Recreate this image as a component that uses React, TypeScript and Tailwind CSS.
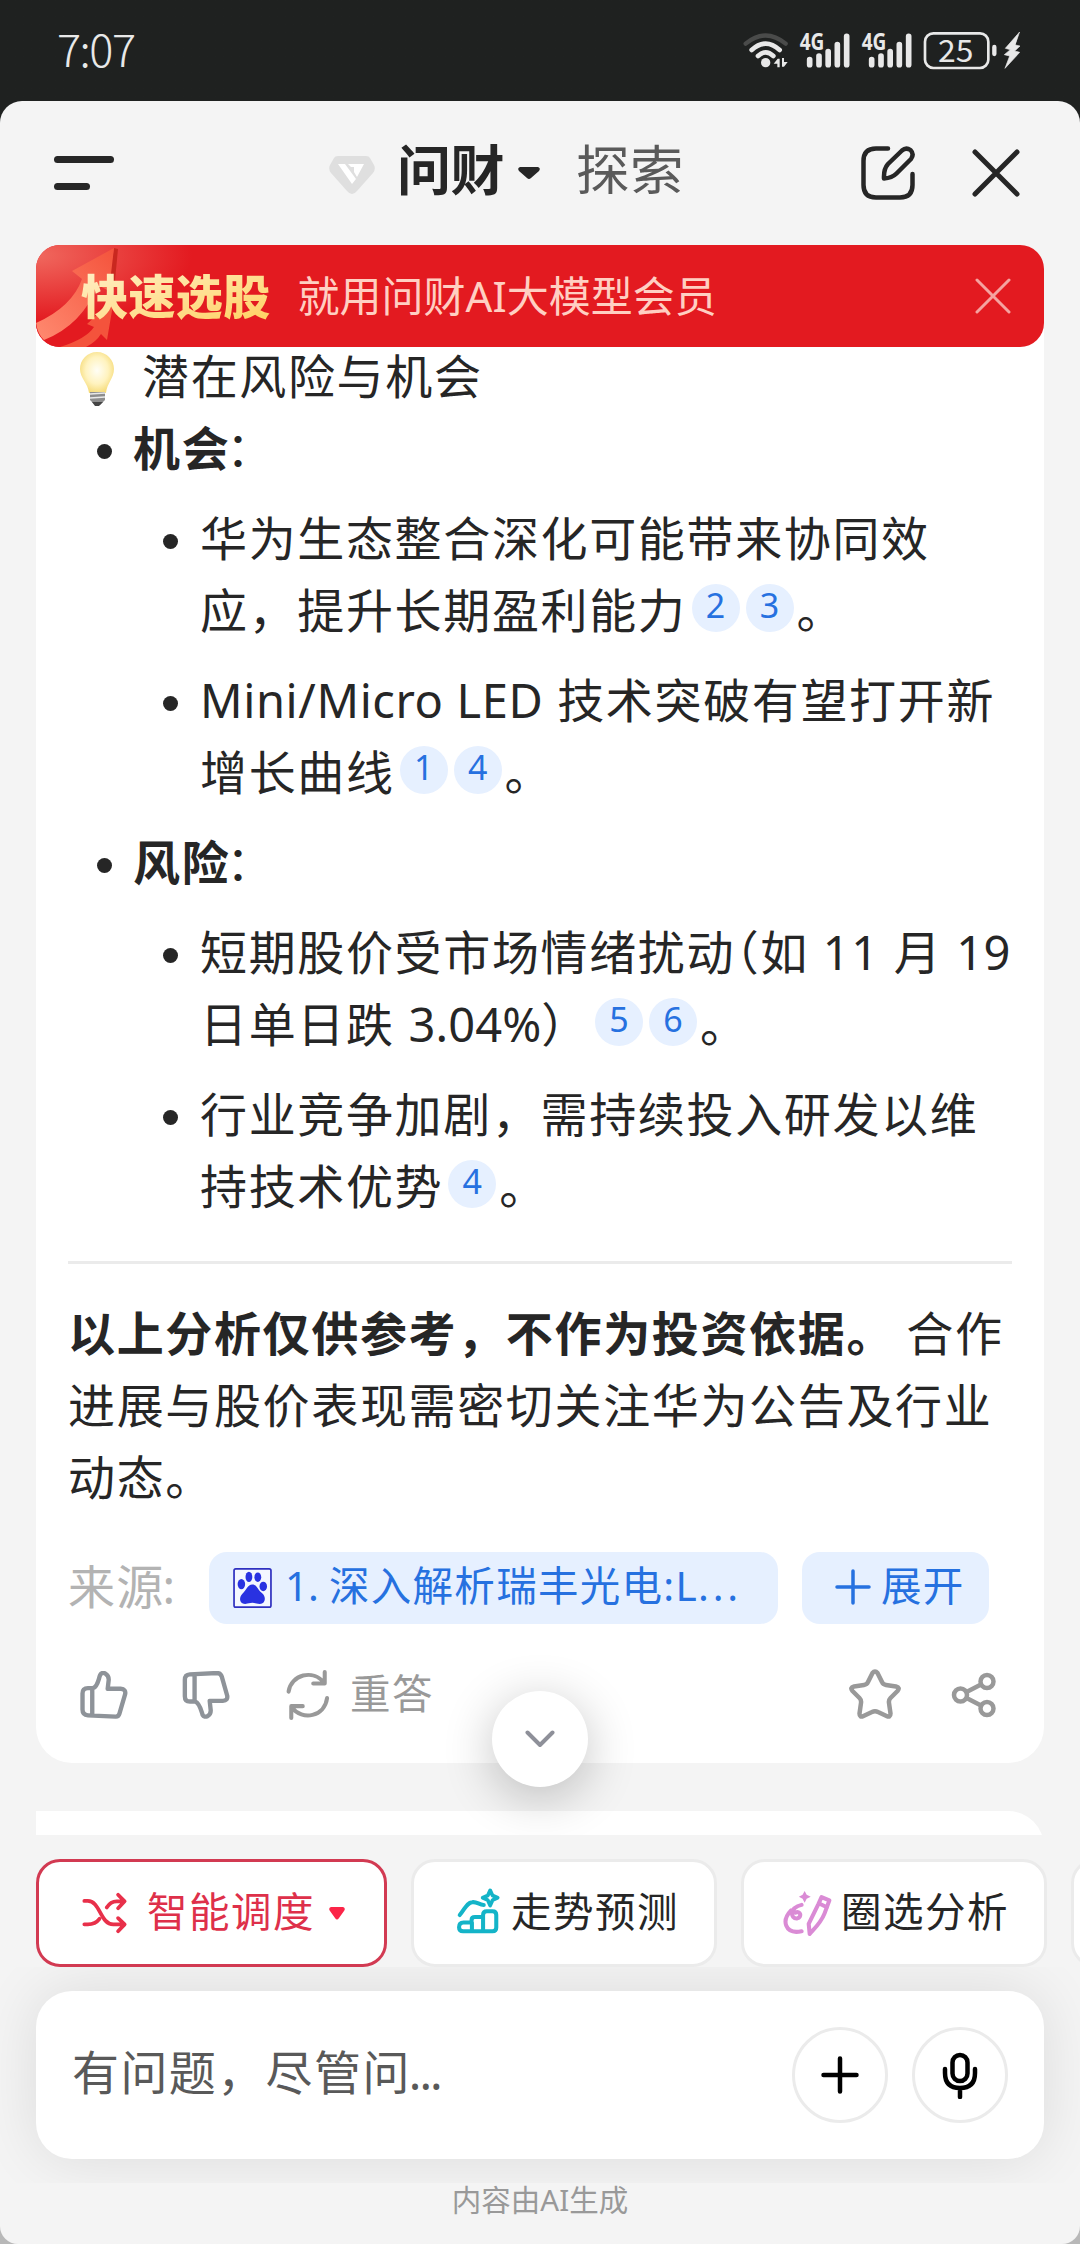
import React from 'react';

const Cite = ({ n }: { n: number }) => (
  <span className="inline-flex justify-center align-top w-12 h-12 mt-[10px] ml-[5px] mr-px rounded-full bg-[#e6f0ff] text-[#2671e0] text-[34px] leading-[43px] tracking-normal">
    {n}
  </span>
);

const Dot = () => <span className="w-[15px] h-[15px] mt-8 rounded-full bg-[#262626] shrink-0" />;

const StatusBar = () => (
  <div className="h-[101px] shrink-0 flex items-start justify-between pl-[57px] pr-[58px] pt-[30px] text-[#e8e8e8]">
    <div className="text-[45px] leading-[39px] mt-[-2px] font-light tracking-[-1.500px] font-['Noto_Sans_CJK_SC',sans-serif]">7:07</div>
    <svg width="279" height="40" viewBox="130 90 837 120" fill="none" stroke="currentColor" strokeLinecap="round" className="overflow-visible">
      <path d="M138 131Q198 82 258 131" stroke="#4a4b4a" strokeWidth="13" />
      <path d="M156 150Q198 112 240 150" strokeWidth="14" />
      <path d="M175 168Q198 146 221 168" strokeWidth="14" />
      <circle cx="198" cy="188" r="14" fill="currentColor" stroke="none" />
      <path d="M222 191L234 176H240V202H233V191ZM264 186L253 200H247V174H253V186Z" fill="currentColor" stroke="none" />
      {[0, 186].map((dx) => (
        <g key={dx} transform={`translate(${dx} 0)`}>
          <text x="300" y="150" fontSize="67" fontWeight="700" textLength="74" lengthAdjust="spacingAndGlyphs" fill="currentColor" stroke="none" fontFamily="Noto Sans">4G</text>
          <path d="M330 179V194M358 168V194M385.500 155V194M413 134V194M441 109V194" strokeWidth="17" />
        </g>
      ))}
      <rect x="676" y="100" width="190" height="104" rx="25" strokeWidth="8" />
      <text x="715" y="186" fontSize="94" fontWeight="400" textLength="106" lengthAdjust="spacingAndGlyphs" fill="currentColor" stroke="none" fontFamily="Noto Sans CJK SC">25</text>
      <path d="M884 141V162" strokeWidth="13" />
      <path d="M959 97L917 145L932 149L914 164L930 168L916 205L960 157L945 153L961 138L947 135Z" fill="currentColor" strokeWidth="2" strokeLinejoin="round" />
    </svg>
  </div>
);

const Header = () => (
  <header className="h-[144px] shrink-0 flex items-center pl-[54px] pr-[59px]">
    <div className="flex flex-col gap-5 w-[275px]">
      <span className="w-[60px] h-[7px] rounded-full bg-[#262626]" />
      <span className="w-9 h-[7px] rounded-full bg-[#262626]" />
    </div>
    <svg width="46" height="40" viewBox="0 0 46 40" className="mt-1">
      <path d="M9 1H37Q40 1 41 3L45 10Q47 14 44 18L28 36Q23 42 18 36L2 18Q-1 14 1 10L5 3Q6 1 9 1Z" fill="#dfdfdf" />
      <path d="M9 9H16L27 24L23 29ZM19 9H35L28 22L25 17V12H22Z" fill="#fff" />
    </svg>
    <h1 className="ml-[22px] mt-[-6px] w-[107px] text-[54px] tracking-[-0.500px] leading-[60px] font-bold text-[#262626] whitespace-nowrap">问财</h1>
    <svg width="24" height="14" viewBox="0 0 24 14" className="ml-[13px]">
      <path d="M3 1H21Q24 2 22 5L14 12Q12 14 10 12L2 5Q0 2 3 1Z" fill="#262626" />
    </svg>
    <span className="ml-[35px] mt-[-6px] text-[53.500px] tracking-[0.500px] leading-[60px] text-[#5a5a5a]">探索</span>
    <svg width="56" height="56" viewBox="0 0 56 56" fill="none" stroke="#262626" strokeWidth="4.500" strokeLinecap="round" strokeLinejoin="round" className="ml-auto">
      <path d="M28 3.500H16Q3.500 3.500 3.500 16V40Q3.500 52.500 16 52.500H40Q52.500 52.500 52.500 40V29" />
      <path d="M28 19L42 5.500Q46 2 50.500 5Q54.500 9 51 14L36.500 28.500Q32 33 24 33.500Q23.500 24 28 19Z" />
    </svg>
    <svg width="52" height="52" viewBox="0 0 52 52" fill="none" stroke="#262626" strokeWidth="5" strokeLinecap="round" className="ml-[54px] mr-[-1px]">
      <path d="M5 5L47 47M47 5L5 47" />
    </svg>
  </header>
);

const Banner = () => (
  <div className="relative z-10 h-[102px] mb-[-24px] shrink-0 mx-9 flex items-center rounded-[24px] overflow-hidden bg-[#e31a20] pr-[33px]">
    <svg width="240" height="102" viewBox="0 0 240 102" className="absolute left-0 top-0">
      <defs>
        <radialGradient id="glow" cx="0" cy="0.100" r="0.650">
          <stop offset="0" stopColor="#f0685e" />
          <stop offset="1" stopColor="#e31a20" />
        </radialGradient>
        <linearGradient id="arrow" x1="0" y1="1" x2="1" y2="0">
          <stop offset="0" stopColor="#ff8a70" />
          <stop offset="1" stopColor="#f4533c" />
        </linearGradient>
      </defs>
      <rect width="240" height="102" fill="url(#glow)" />
      <path d="M78 3L82 4L78 46L72 40Z" fill="#c9281f" />
      <path d="M0 78Q36 62 46 34L36 26L78 3L73 46L62 40Q46 80 8 95Q2 90 0 78Z" fill="url(#arrow)" />
      <path d="M24 102Q50 94 58 82L51 79L78 54L71 95L65 89Q60 97 50 102Z" fill="#f4533c" />
    </svg>
    <span className="relative ml-[45px] text-[47px] tracking-[0.400px] leading-[60px] font-black bg-linear-to-br from-[#fff0c8] to-[#ffd05a] bg-clip-text text-transparent whitespace-nowrap">快速选股</span>
    <span className="relative ml-[27px] text-[42px] leading-[60px] text-[#ffcfc2] whitespace-nowrap">就用问财AI大模型会员</span>
    <svg width="36" height="36" viewBox="0 0 36 36" stroke="#f5a3a0" strokeWidth="3" strokeLinecap="round" className="ml-auto">
      <path d="M2 2L34 34M34 2L2 34" />
    </svg>
  </div>
);

const Bulb = () => (
  <svg width="34" height="54" viewBox="0 0 34 54" className="mt-[5px]">
    <defs>
      <radialGradient id="bulb" cx="0.500" cy="0.450" r="0.550">
        <stop offset="0" stopColor="#fffef6" />
        <stop offset="0.600" stopColor="#fff3bf" />
        <stop offset="1" stopColor="#f6dc7c" />
      </radialGradient>
    </defs>
    <path d="M17 0C27 0 34 8 34 17C34 26 27 31 26 41H9C8 31 0 26 0 17C0 8 7 0 17 0Z" fill="url(#bulb)" />
    <path d="M10 40H25V48L20 53H15L10 48Z" fill="#8d8d8d" />
    <path d="M10 42L25 41M10 46L25 45" stroke="#e8e8e8" strokeWidth="1.500" />
    <path d="M12 50H23L19 54H15Z" fill="#444" />
  </svg>
);

const Answer = () => (
  <div className="text-[47px] leading-[72px] tracking-[1.650px] whitespace-nowrap text-[#262626]">
    <div className="flex items-center h-[72px] pl-[12px]">
      <Bulb />
      <span className="ml-[28px]">潜在风险与机会</span>
    </div>
    <ul className="pl-[29px]">
      <li className="flex gap-[21px]">
        <Dot />
        <p><b>机会</b><span className="ml-[-4px]">：</span></p>
      </li>
      <li className="mt-[18px] ml-[66px] flex gap-[22px]">
        <Dot />
        <p>华为生态整合深化可能带来协同效<br />应，提升长期盈利能力<Cite n={2} /><Cite n={3} /><span className="ml-[2px]">。</span></p>
      </li>
      <li className="mt-[18px] ml-[66px] flex gap-[22px]">
        <Dot />
        <p><span className="tracking-[0.600px]">Mini/Micro LED</span> 技术突破有望打开新<br />增长曲线<Cite n={1} /><Cite n={4} /><span className="ml-[2px]">。</span></p>
      </li>
      <li className="mt-[18px] flex gap-[21px]">
        <Dot />
        <p><b>风险</b><span className="ml-[-4px]">：</span></p>
      </li>
      <li className="mt-[18px] ml-[66px] flex gap-[22px]">
        <Dot />
        <p>短期股价受市场情绪扰动<span className="[font-feature-settings:'halt']">（</span>如 11 月 <span className="tracking-[0.200px]">19</span><br />日单日跌 <span className="tracking-[0.100px]">3.04%</span>）<Cite n={5} /><Cite n={6} /><span className="ml-[2px]">。</span></p>
      </li>
      <li className="mt-[18px] ml-[66px] flex gap-[22px]">
        <Dot />
        <p>行业竞争加剧，需持续投入研发以维<br />持技术优势<Cite n={4} /><span className="ml-[2px]">。</span></p>
      </li>
    </ul>
    <hr className="mt-[39px] mb-[33px] h-[3px] border-0 bg-[#ebebeb]" />
    <p><b>以上分析仅供参考，不作为投资依据。</b><span className="tracking-[-1px]"> </span>合作<br />进展与股价表现需密切关注华为公告及行业<br />动态。</p>
  </div>
);

const Sources = () => (
  <div className="mt-[39px] flex items-center h-[72px] whitespace-nowrap">
    <span className="w-[141px] mt-[-4px] text-[47px] tracking-[1.200px] text-[#b3b3b3]">来源<span className="ml-[-2px]">:</span></span>
    <div className="w-[569px] h-[72px] rounded-[18px] bg-[#e6f0ff] flex items-center pl-6">
      <svg width="39" height="40" viewBox="0 0 113 117" fill="#2932e1">
        <rect x="2.500" y="2.500" width="108" height="112" rx="5" fill="#f4f7ff" stroke="#2f30c0" strokeWidth="5" />
        <ellipse cx="24" cy="47" rx="11" ry="15" />
        <ellipse cx="46" cy="26" rx="10" ry="15" />
        <ellipse cx="72" cy="27" rx="10" ry="14" />
        <ellipse cx="88" cy="54" rx="11" ry="14" />
        <path d="M56 48C70 48 70 62 84 73C98 84 94 105 78 105C68 105 64 102 56 102C48 102 45 105 35 105C18 105 16 86 27 75C39 65 42 48 56 48Z" />
      </svg>
      <span className="ml-[13px] mt-[-4px] text-[40.500px] tracking-[1.300px] text-[#2671e0]"><span className="tracking-[-0.200px]">1. </span>深入解析瑞丰光电:L<span className="tracking-[3.800px]">...</span></span>
    </div>
    <div className="ml-6 w-[187px] h-[72px] rounded-[18px] bg-[#e6f0ff] flex items-center pl-[33px] text-[#2671e0]">
      <svg width="36" height="36" viewBox="0 0 36 36" stroke="currentColor" strokeWidth="3.500" strokeLinecap="round" className="mt-[-2px]">
        <path d="M18 2V34M2 18H34" />
      </svg>
      <span className="ml-2.5 mt-[-4px] text-[40.500px] tracking-[1.300px]">展开</span>
    </div>
  </div>
);

const Actions = () => (
  <div className="mt-[44px] flex items-center h-[54px] text-[#999]">
    <svg width="48" height="48" viewBox="232 427 140 143" fill="none" stroke="#8e9399" strokeWidth="13" strokeLinejoin="round" className="ml-3">
      <path d="M267 478V562M254 478H270C284 472 285 452 291 438C297 426 317 436 316 454L313 480H352Q368 481 365 496L348 554Q345 564 336 563L254 559Q238 558 238 542V494Q238 478 254 478Z" />
    </svg>
    <svg width="48" height="48" viewBox="528 427 140 143" fill="none" stroke="#8e9399" strokeWidth="13" strokeLinejoin="round" className="ml-[54px]">
      <path d="M564 436V518M550 518H566C580 524 583 544 588 558C593 568 613 562 612 544L609 516H648Q664 515 661 500L645 444Q642 433 630 433L550 437Q535 438 535 453V502Q535 518 550 518Z" />
    </svg>
    <svg width="44" height="50" viewBox="831 424 127 148" fill="none" stroke="currentColor" strokeWidth="12" strokeLinecap="round" strokeLinejoin="round" className="ml-14">
      <path d="M837 488C844 438 910 420 942 462M944 430V464H910M951 507C944 562 878 576 846 534M845 566V531H879" />
    </svg>
    <span className="ml-[20px] text-[40.500px] tracking-[1.500px] leading-[54px] mt-[-3px]">重答</span>
    <svg width="52" height="50" viewBox="0 0 52 50" fill="none" stroke="currentColor" strokeWidth="4.500" strokeLinejoin="round" className="ml-auto mt-[-2px]">
      <path d="M23.500 4Q26 1 28.500 4L33 13Q34 15.500 37 16L47 17.500Q51.500 18.500 48.500 22L41.500 29Q39.500 31 40 34L41.500 44.500Q41.500 49 37.500 47L29 43Q26 41.500 23 43L14.500 47Q10.500 49 10.500 44.500L12 34Q12.500 31 10.500 29L3.500 22Q0.500 18.500 5 17.500L15 16Q18 15.500 19 13Z" />
    </svg>
    <svg width="46" height="46" viewBox="0 0 46 46" fill="none" stroke="currentColor" strokeWidth="4.500" className="ml-[50px] mr-[15px]">
      <circle cx="9.500" cy="23" r="6.500" />
      <circle cx="36" cy="9.500" r="6.500" />
      <circle cx="36" cy="36.500" r="6.500" />
      <path d="M15.500 20L30 12.500M15.500 26L30 33.500" />
    </svg>
  </div>
);

const chip = 'h-[108px] shrink-0 rounded-[24px] border-[3px] bg-white flex items-center text-[40.500px] tracking-[1.500px] whitespace-nowrap';

const Chips = () => (
  <div className="mt-6 h-[108px] shrink-0 flex gap-6 pl-9 overflow-hidden text-[#262626]">
    <div className={`${chip} w-[351px] border-[#d23a52] text-[#de304a] pl-[43px]`}>
      <svg width="46" height="42" viewBox="240 218 132 122" fill="none" stroke="#e8304a" strokeWidth="11" strokeLinecap="round" strokeLinejoin="round">
        <path d="M246 244H256C292 244 292 312 330 312H362M246 312H256Q278 312 290 296M311 263Q322 245 340 245H362M344 226L363 245L344 265M344 294L363 312L344 332" />
      </svg>
      <span className="ml-[19px] mt-[-2px]">智能调度</span>
      <svg width="16" height="13" viewBox="0 0 16 13" className="ml-[14px]">
        <path d="M2 0H14Q17 1 15 4L10 11Q8 14 6 11L1 4Q-1 1 2 0Z" fill="#fb2548" />
      </svg>
    </div>
    <div className={`${chip} w-[306px] border-[#ebebeb] pl-[42px]`}>
      <svg width="44" height="46" viewBox="1323 202 128 136" fill="none" stroke="#14b4c8" strokeWidth="12" strokeLinecap="round" strokeLinejoin="round" className="mt-[-4px]">
        <path d="M1333 282C1350 262 1353 246 1370 244C1384 242 1390 252 1404 252" />
        <path d="M1331 318Q1331 304 1344 304H1368V297Q1368 288 1378 288H1402V282Q1402 271 1413 271H1430Q1441 271 1441 282V319Q1441 330 1430 330H1343Q1331 330 1331 318ZM1369 304V330M1402 288V330" />
        <path d="M1423 209L1430 224L1445 231L1430 238L1423 254L1416 238L1401 231L1416 224Z" strokeWidth="11" />
      </svg>
      <span className="ml-[11px] mt-[-2px]">走势预测</span>
    </div>
    <div className={`${chip} w-[306px] border-[#ebebeb] pl-[39px]`}>
      <svg width="49" height="46" viewBox="704 210 143 136" fill="none" stroke="#da8bd5" strokeWidth="12" strokeLinecap="round" strokeLinejoin="round">
        <path d="M767 213L773 224L785 230L773 236L767 248L761 236L750 230L761 224Z" fill="#da8bd5" stroke="none" />
        <path d="M758 254C722 262 724 296 745 294C760 290 755 270 740 277M727 270C698 300 708 342 758 332" />
        <path d="M817 231L840 241L826 279C816 305 800 320 782 340L779 310L808 251ZM810 250L833 261" />
      </svg>
      <span className="ml-[9px] mt-[-2px]">圈选分析</span>
    </div>
    <div className={`${chip} w-[306px] border-[#ebebeb]`} />
  </div>
);

const InputBar = () => (
  <div className="h-[216px] shrink-0 overflow-hidden px-9 py-6">
    <div className="h-[168px] rounded-[36px] bg-white shadow-[0_0_60px_rgba(0,0,0,0.10)] flex items-center pl-[36px] pr-9">
      <span className="flex-1 text-[47px] tracking-[1.400px] leading-[72px] mt-[-6px] text-[#595959]">有问题，尽管问<span className="ml-[-2px] tracking-[-2px]">...</span></span>
      <button className="w-24 h-24 rounded-full border-[3px] border-[#ebebeb] flex items-center justify-center">
        <svg width="38" height="38" viewBox="0 0 38 38" stroke="#000" strokeWidth="4.500" strokeLinecap="round">
          <path d="M19 2.500V35.500M2.500 19H35.500" />
        </svg>
      </button>
      <button className="ml-6 w-24 h-24 rounded-full border-[3px] border-[#ebebeb] flex items-center justify-center">
        <svg width="36" height="48" viewBox="0 0 36 48" fill="none" stroke="#000" strokeWidth="4.500" strokeLinecap="round">
          <rect x="10.500" y="4" width="15" height="26" rx="7.500" />
          <path d="M3 18V22Q3 37 18 37Q33 37 33 22V18M18 37V46" />
        </svg>
      </button>
    </div>
  </div>
);

export default function App() {
  return (
    <div className="w-[1080px] h-[2244px] overflow-hidden flex flex-col bg-linear-to-b from-[#1f2120] from-50% to-[#b8b8b8] to-50% font-['Noto_Sans','Noto_Sans_CJK_SC',sans-serif]">
      <StatusBar />
      <div className="flex-1 min-h-0 flex flex-col rounded-t-[22px] rounded-b-[18px] bg-[#f4f4f4]">
        <Header />
        <Banner />
        <main className="relative h-[1512px] shrink-0 overflow-hidden px-9">
          <section className="h-[1440px] rounded-b-[36px] bg-white px-8 pt-[17px]">
            <Answer />
            <Sources />
            <Actions />
          </section>
          <section className="mt-12 h-24 rounded-tr-[36px] bg-white" />
          <button className="absolute left-[492px] top-[1368px] w-24 h-24 rounded-full bg-white shadow-[0_10px_50px_rgba(0,0,0,0.24)] flex items-center justify-center">
            <svg width="30" height="18" viewBox="0 0 30 18" fill="none" stroke="#8e9099" strokeWidth="4" strokeLinecap="round" strokeLinejoin="round">
              <path d="M2.500 2.500L15 15L27.500 2.500" />
            </svg>
          </button>
        </main>
        <Chips />
        <InputBar />
        <p className="text-center text-[29.500px] leading-[34px] text-[#999]">内容由AI生成</p>
      </div>
    </div>
  );
}
